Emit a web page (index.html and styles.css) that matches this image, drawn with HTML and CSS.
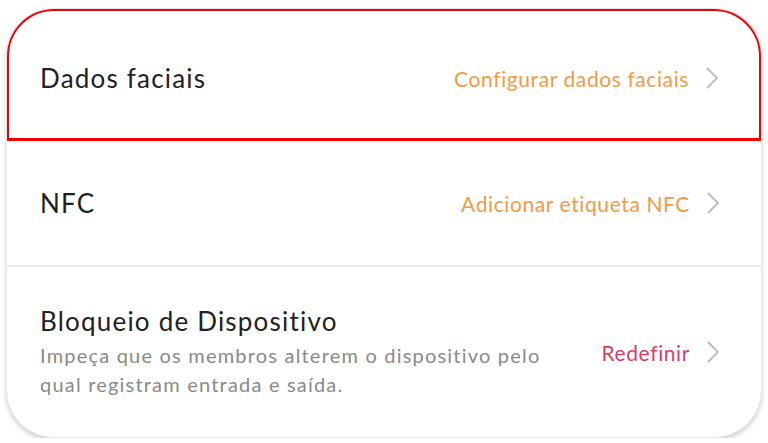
FILE: index.html
```html
<!DOCTYPE html>
<html lang="pt">
<head>
  <meta charset="UTF-8">
  <meta name="viewport" content="width=device-width, initial-scale=1.0">
  <title>Configurações</title>
  <link rel="stylesheet" href="styles.css">
</head>
<body>
  <div class="card">
    <div class="row row-selected">
      <div class="row-main">
        <div class="row-title">Dados faciais</div>
      </div>
      <div class="row-action orange">Configurar dados faciais</div>
      <svg class="chevron" width="14" height="24" viewBox="0 0 14 24"><polyline points="2,2 12,12 2,22" /></svg>
    </div>

    <div class="row row-nfc">
      <div class="row-main">
        <div class="row-title">NFC</div>
      </div>
      <div class="row-action orange">Adicionar etiqueta NFC</div>
      <svg class="chevron" width="14" height="24" viewBox="0 0 14 24"><polyline points="2,2 12,12 2,22" /></svg>
    </div>

    <div class="row row-lock">
      <div class="row-main">
        <div class="row-title">Bloqueio de Dispositivo</div>
        <div class="row-desc">Impeça que os membros alterem o dispositivo pelo qual registram entrada e saída.</div>
      </div>
      <div class="row-action pink">Redefinir</div>
      <svg class="chevron" width="14" height="24" viewBox="0 0 14 24"><polyline points="2,2 12,12 2,22" /></svg>
    </div>
  </div>
</body>
</html>
```

FILE: styles.css
```css
body {
  margin: 0;
  background-color: white;
  font-family: Lato, "Noto Sans", sans-serif;
  color: #222;
}

.card {
  margin: 8px 6px 0 6px;
  height: 430px;
  box-sizing: border-box;
  background-color: white;
  border: 1px solid #e6e6e6;
  border-radius: 48px;
  box-shadow: 0 3px 5px rgba(0, 0, 0, 0.18);
  overflow: hidden;
  display: flex;
  flex-direction: column;
}

.row {
  display: flex;
  align-items: center;
  padding: 0 41px 0 33px;
}

.row-selected {
  height: 133px;
  box-sizing: border-box;
  margin: -1px -1px 0 -1px;
  border: 3px solid #f00000;
  border-radius: 48px 48px 0 0;
  padding: 7px 40px 0 31px;
}

.row-nfc {
  height: 124px;
  border-bottom: 2px solid #e8e8e8;
}

.row-lock {
  flex: 1;
}

.row-main {
  flex: 1;
}

.row-title {
  font-size: 26px;
  line-height: 32px;
  letter-spacing: 1.2px;
  color: #222;
}

.row-desc {
  margin-top: 4px;
  width: 530px;
  font-size: 20px;
  line-height: 29px;
  letter-spacing: 1.2px;
  color: #8a8a8a;
}

.row-action {
  font-size: 21px;
  letter-spacing: 0.6px;
  margin-right: 16px;
}

.orange {
  color: #f29a45;
}

.pink {
  color: #d93d66;
}

.chevron {
  fill: none;
  stroke: #bcbcbc;
  stroke-width: 1.8;
}
```
